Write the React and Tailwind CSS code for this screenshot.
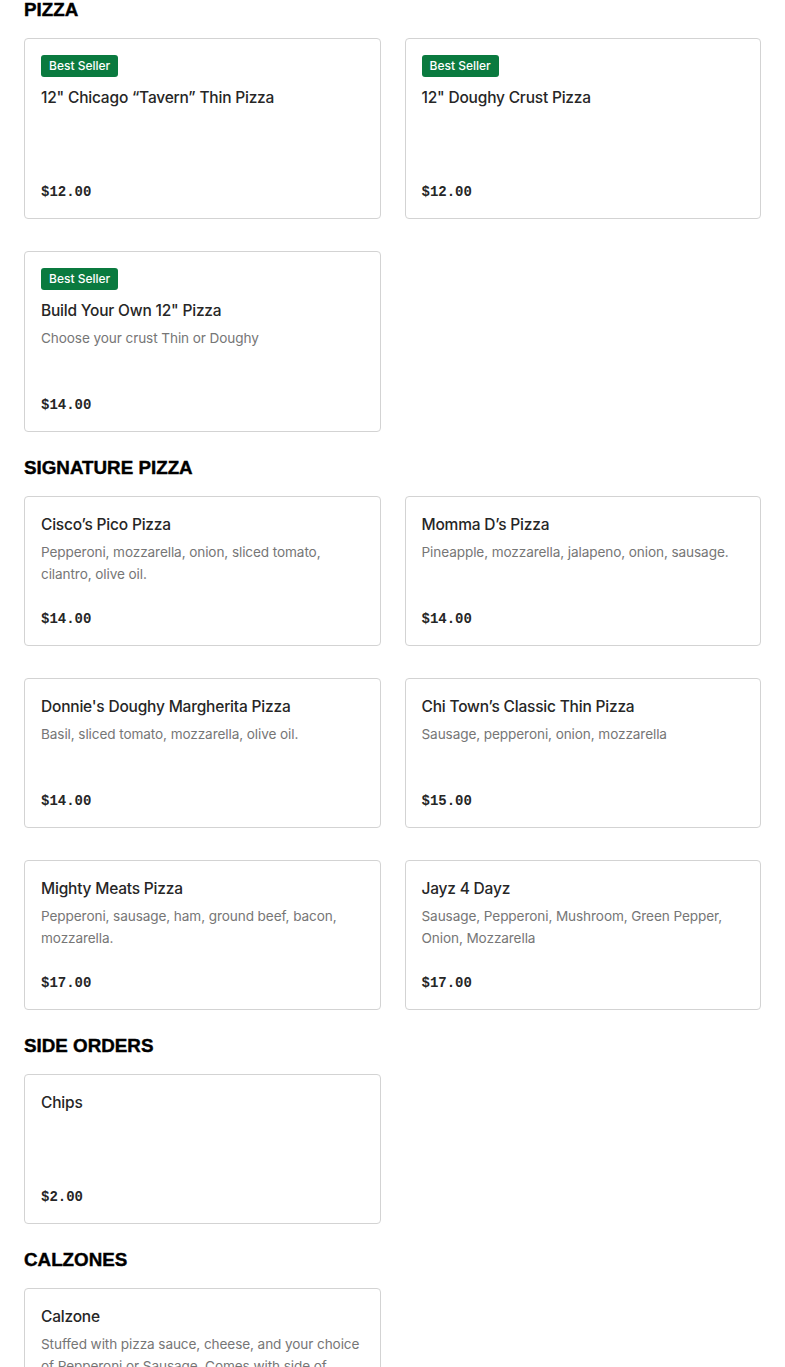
const sections = [
  {
    title: "PIZZA",
    items: [
      { name: "12\" Chicago “Tavern” Thin Pizza", price: "$12.00", badge: true },
      { name: "12\" Doughy Crust Pizza", price: "$12.00", badge: true },
      { name: "Build Your Own 12\" Pizza", desc: "Choose your crust Thin or Doughy", price: "$14.00", badge: true },
    ],
  },
  {
    title: "SIGNATURE PIZZA",
    items: [
      { name: "Cisco’s Pico Pizza", desc: "Pepperoni, mozzarella, onion, sliced tomato, cilantro, olive oil.", price: "$14.00" },
      { name: "Momma D’s Pizza", desc: "Pineapple, mozzarella, jalapeno, onion, sausage.", price: "$14.00" },
      { name: "Donnie's Doughy Margherita Pizza", desc: "Basil, sliced tomato, mozzarella, olive oil.", price: "$14.00" },
      { name: "Chi Town’s Classic Thin Pizza", desc: "Sausage, pepperoni, onion, mozzarella", price: "$15.00" },
      { name: "Mighty Meats Pizza", desc: "Pepperoni, sausage, ham, ground beef, bacon, mozzarella.", price: "$17.00" },
      { name: "Jayz 4 Dayz", desc: "Sausage, Pepperoni, Mushroom, Green Pepper, Onion, Mozzarella", price: "$17.00" },
    ],
  },
  {
    title: "SIDE ORDERS",
    items: [{ name: "Chips", price: "$2.00" }],
  },
  {
    title: "CALZONES",
    items: [
      { name: "Calzone", desc: "Stuffed with pizza sauce, cheese, and your choice of Pepperoni or Sausage. Comes with side of pizza sauce.", price: "$12.00" },
    ],
  },
];

function ItemCard({ item }) {
  return (
    <div className="flex flex-col border border-[#d3d3d3] rounded-[4px] bg-white p-4">
      {item.badge && (
        <div className="self-start mb-[9px] h-[22px] px-2 flex items-center rounded-[3px] bg-[#0a7a3f] text-white text-[12px] font-medium font-['Inter',sans-serif]">
          Best Seller
        </div>
      )}
      <div className="text-[15.5px] leading-6 font-medium text-[#262626] font-['Inter',sans-serif] tracking-[-0.2px]">{item.name}</div>
      <div className="mt-1 min-h-[44px] text-[13.6px] leading-[22px] text-[#767676] font-['Inter',sans-serif] tracking-[-0.1px]">
        {item.desc}
      </div>
      <div className="mt-6 text-[14px] leading-5 font-bold text-[#262626] font-['Liberation_Mono',monospace]">{item.price}</div>
    </div>
  );
}

export default function App() {
  return (
    <div className="min-h-screen bg-white px-6 pb-10 overflow-hidden">
      {sections.map((s, i) => (
        <div key={s.title} className={i === 0 ? "-mt-[2px]" : "mt-6"}>
          <h2 className="text-[18.8px] leading-6 font-bold text-black font-['Liberation_Sans',Arial,sans-serif] [-webkit-text-stroke:0.4px_black] mb-[16px]">
            {s.title}
          </h2>
          <div className="grid grid-cols-2 gap-x-6 gap-y-8">
            {s.items.map(it => (
              <ItemCard key={it.name} item={it} />
            ))}
          </div>
        </div>
      ))}
    </div>
  );
}
